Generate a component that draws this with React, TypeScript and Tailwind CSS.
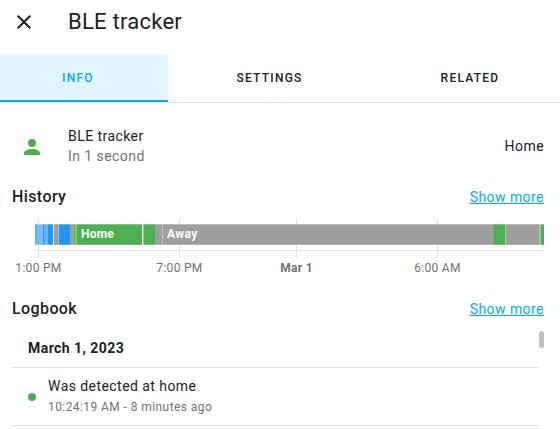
const segments: { w: string; c: string }[] = [
  { w: "w-[3px]", c: "bg-[#64b5f6]" },
  { w: "w-[5px]", c: "bg-[#74bdf8]" },
  { w: "w-px", c: "bg-[#2196f3]" },
  { w: "w-[4px]", c: "bg-[#64b5f6]" },
  { w: "w-[5px]", c: "bg-[#2196f3]" },
  { w: "w-px", c: "bg-white" },
  { w: "w-[4px]", c: "bg-[#9e9e9e]" },
  { w: "w-px", c: "bg-[#90bfe6]" },
  { w: "w-[11px]", c: "bg-[#2196f3]" },
  { w: "w-[2px]", c: "bg-[#9e9e9e]" },
  { w: "w-[2px]", c: "bg-[#85b988]" },
  { w: "w-px", c: "bg-[#4caf50]" },
  { w: "w-[2px]", c: "bg-[#81c784]" },
  { w: "w-[65px]", c: "bg-[#4caf50]" },
  { w: "w-px", c: "bg-white" },
  { w: "w-px", c: "bg-[#8fcb92]" },
  { w: "w-[11px]", c: "bg-[#4caf50]" },
  { w: "w-[7px]", c: "bg-[#9e9e9e]" },
  { w: "w-px", c: "bg-[#a5cfa7]" },
  { w: "w-[330px]", c: "bg-[#9e9e9e]" },
  { w: "w-px", c: "bg-[#79a87b]" },
  { w: "w-[11px]", c: "bg-[#4caf50]" },
  { w: "w-px", c: "bg-[#a5c5a6]" },
  { w: "w-[33px]", c: "bg-[#9e9e9e]" },
  { w: "w-[2px]", c: "bg-[#a0cba2]" },
  { w: "w-[3px]", c: "bg-[#4caf50]" },
];

const ticks = [
  { line: "left-[26px]", label: "1:00 PM", bold: false },
  { line: "left-[167px]", label: "7:00 PM", bold: false },
  { line: "left-[284px]", label: "Mar 1", bold: true },
  { line: "left-[425px]", label: "6:00 AM", bold: false },
];

function SectionHeader({ title }: { title: string }) {
  return (
    <div className="flex h-6 items-center justify-between">
      <h2 className="text-[16px] font-medium leading-6 tracking-[0.4px]">{title}</h2>
      <a className="text-[14px] leading-5 tracking-[0.45px] text-[#03a9f4] underline">Show more</a>
    </div>
  );
}

function Timeline() {
  return (
    <div className="relative h-[58px]">
      {ticks.map((t) => (
        <div key={t.label} className={`absolute top-0 h-[39px] w-px bg-[#e0e0e0] ${t.line}`}>
          <span
            className={`absolute left-1/2 top-[41px] -translate-x-1/2 whitespace-nowrap text-[12px] leading-4 tracking-[0.3px] text-[#727272] ${t.bold ? "font-bold" : ""}`}
          >
            {t.label}
          </span>
        </div>
      ))}
      <div className="absolute left-[23px] top-[31px] h-px w-[509px] bg-[#e0e0e0]" />
      <div className="absolute left-[23px] top-[5px] flex h-[21px]">
        {segments.map((s, i) => (
          <div key={i} className={`${s.w} ${s.c}`} />
        ))}
        <div className="absolute inset-x-0 top-0 h-px bg-white/30" />
        <div className="absolute inset-x-0 bottom-0 h-px bg-white/20" />
        <span className="absolute left-[46px] top-[2px] text-[12px] font-bold leading-4 tracking-[0.2px] text-white">Home</span>
        <span className="absolute left-[132px] top-[2px] text-[12px] font-bold leading-4 tracking-[0.4px] text-white">Away</span>
      </div>
    </div>
  );
}

export default function App() {
  return (
    <div className="h-[429px] w-[560px] overflow-hidden bg-white font-[Roboto,sans-serif] text-[#212121]">
      <header className="flex h-[54px] items-start pl-3 pt-[10px]">
        <svg className="h-6 w-6" viewBox="0 0 24 24" fill="currentColor">
          <path d="M19,6.41L17.59,5L12,10.59L6.41,5L5,6.41L10.59,12L5,17.59L6.41,19L12,13.41L17.59,19L19,17.59L13.41,12L19,6.41Z" />
        </svg>
        <h1 className="ml-8 -mt-[2px] text-[22px] leading-7 tracking-[0.25px]">BLE tracker</h1>
      </header>
      <nav className="flex h-[49px] border-b border-[#e0e0e0] text-[12px] font-medium tracking-[1.25px]">
        <div className="-mb-px flex h-12 w-[168px] items-center justify-center border-b-2 border-[#03a9f4] bg-[#e1f5fe] pr-[12px] text-[#03a9f4]">
          <span className="mt-px">INFO</span>
        </div>
        <div className="flex h-12 w-[203px] items-center justify-center">SETTINGS</div>
        <div className="flex h-12 w-[189px] items-center justify-center pl-[9px]">RELATED</div>
      </nav>
      <main className="pl-3 pr-4 pt-[23px]">
        <div className="flex h-10 items-center">
          <svg className="ml-2 mt-[2px] h-6 w-6 text-[#4caf50]" viewBox="0 0 24 24" fill="currentColor">
            <path d="M12,4A4,4 0 0,1 16,8A4,4 0 0,1 12,12A4,4 0 0,1 8,8A4,4 0 0,1 12,4M12,14C16.42,14 20,15.79 20,18V20H4V18C4,15.79 7.58,14 12,14Z" />
          </svg>
          <div className="ml-6 flex-1 text-[14px] leading-5 tracking-[0.44px]">
            <div>BLE tracker</div>
            <div className="text-[#727272]">In 1 second</div>
          </div>
          <span className="text-[14px] tracking-[0.44px]">Home</span>
        </div>
        <div className="mt-[19px]"><SectionHeader title="History" /></div>
        <div className="mt-[10px]"><Timeline /></div>
        <div className="mt-[20px]"><SectionHeader title="Logbook" /></div>
        <div className="relative mt-[10px] pr-[5px]">
          <div className="absolute right-0 top-0 h-[17px] w-[5px] rounded-full bg-[#c1c1c1]" />
          <div className="flex h-[37px] items-center border-b border-[#e0e0e0] pb-[2px] pl-4 text-[14px] font-bold tracking-[0.45px]">March 1, 2023</div>
          <div className="flex h-[58px] items-center border-b border-[#e0e0e0] pl-4">
            <div className="mt-px h-2 w-2 rounded-full bg-[#4caf50]" />
            <div className="ml-3">
              <div className="-mt-px text-[14px] leading-5 tracking-[0.44px]">Was detected at home</div>
              <div className="mt-px text-[12px] leading-5 tracking-[0.42px] text-[#727272]">10:24:19 AM - 8 minutes ago</div>
            </div>
          </div>
        </div>
      </main>
    </div>
  );
}
